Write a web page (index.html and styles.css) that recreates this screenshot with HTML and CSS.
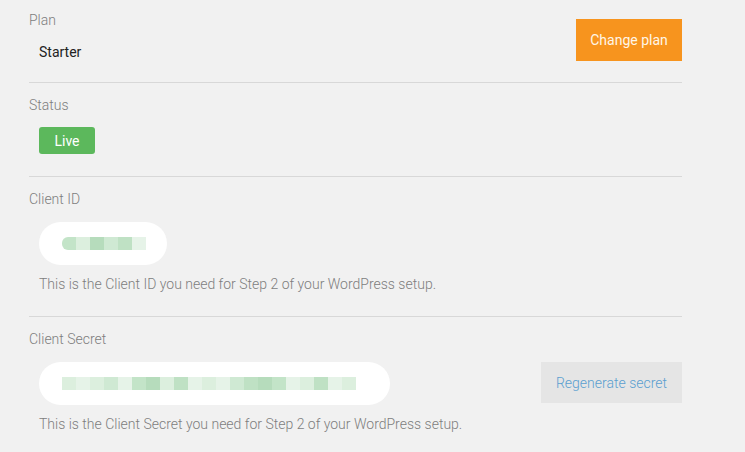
FILE: index.html
```html
<!DOCTYPE html>
<html>
<head>
<meta charset="utf-8">
<link rel="stylesheet" href="styles.css">
</head>
<body>
<div class="panel">
  <section class="section section-plan">
    <div class="field">
      <div class="label">Plan</div>
      <div class="value">Starter</div>
    </div>
    <button class="btn btn-orange">Change plan</button>
  </section>

  <section class="section section-status">
    <div class="label">Status</div>
    <span class="badge">Live</span>
  </section>

  <section class="section section-id">
    <div class="label">Client ID</div>
    <div class="pill pill-id">
      <span class="blk b1"></span><span class="blk b2"></span><span class="blk b3"></span><span class="blk b4"></span><span class="blk b5"></span><span class="blk b6"></span>
    </div>
    <div class="help">This is the Client ID you need for Step 2 of your WordPress setup.</div>
  </section>

  <section class="section last">
    <div class="label">Client Secret</div>
    <div class="row">
      <div class="pill pill-secret">
        <span class="blk b2"></span><span class="blk b6"></span><span class="blk b2"></span><span class="blk b4"></span><span class="blk b6"></span><span class="blk b1"></span><span class="blk b3"></span><span class="blk b2"></span><span class="blk b5"></span><span class="blk b6"></span><span class="blk b2"></span><span class="blk b6"></span><span class="blk b4"></span><span class="blk b5"></span><span class="blk b3"></span><span class="blk b1"></span><span class="blk b6"></span><span class="blk b2"></span><span class="blk b5"></span><span class="blk b6"></span><span class="blk b2"></span>
      </div>
      <button class="btn btn-grey">Regenerate secret</button>
    </div>
    <div class="help">This is the Client Secret you need for Step 2 of your WordPress setup.</div>
  </section>
</div>
</body>
</html>
```
FILE: styles.css
```css
* { box-sizing: border-box; }
html, body { margin: 0; padding: 0; }
body {
  background: #f1f1f1;
  font-family: Roboto, "Liberation Sans", Arial, sans-serif;
  width: 745px;
  height: 452px;
  overflow: hidden;
}
.panel {
  margin-left: 29px;
  width: 653px;
}
.section {
  border-bottom: 1px solid #d8d8d8;
  padding: 14px 0 21px 0;
}
.section.last { border-bottom: none; }
.section-plan {
  display: flex;
  justify-content: space-between;
  align-items: flex-start;
  padding: 12px 0 21px 0;
}
.section-status { padding-bottom: 22px; }
.section-status .label { margin-bottom: 13px; }
.section-id { padding-bottom: 23px; }
.label {
  font-size: 14px;
  font-weight: 300;
  line-height: 17px;
  color: #7e7e7e;
  margin-bottom: 14px;
}
.section-plan .label { margin-bottom: 15px; }
.value {
  font-size: 14px;
  line-height: 17px;
  color: #222;
  padding-left: 10px;
}
.btn {
  border: none;
  font-family: inherit;
  font-size: 14px;
  cursor: pointer;
  border-radius: 0;
}
.btn-orange {
  background: #f7941e;
  color: #fff6e8;
  width: 106px;
  height: 42px;
  margin-top: 7px;
}
.btn-grey {
  background: #e5e5e5;
  color: #5a9fd0;
  font-weight: 300;
  width: 141px;
  height: 41px;
}
.badge {
  display: inline-flex;
  align-items: center;
  justify-content: center;
  margin-left: 10px;
  width: 56px;
  height: 27px;
  background: #5cb85c;
  color: #fff;
  font-size: 14px;
  border-radius: 3px;
}
.pill {
  margin-left: 10px;
  background: #fff;
  border-radius: 22px;
  height: 43px;
  display: flex;
  align-items: center;
  padding-left: 23px;
}
.pill-id { width: 128px; }
.pill-secret { width: 351px; }
.blk {
  display: inline-block;
  width: 14px;
  height: 13px;
}
.b1 { background: #c3e4c8; }
.b2 { background: #dcefde; }
.b3 { background: #b6dcbc; }
.b4 { background: #cfe9d3; }
.b5 { background: #bfe1c4; }
.b6 { background: #e6f3e8; }
.pill-id .blk:first-child { border-radius: 6px 0 0 6px; }
.row {
  display: flex;
  justify-content: space-between;
  align-items: flex-start;
}
.help {
  margin-top: 11px;
  padding-left: 10px;
  font-size: 14px;
  font-weight: 300;
  line-height: 17px;
  color: #7e7e7e;
}
```
